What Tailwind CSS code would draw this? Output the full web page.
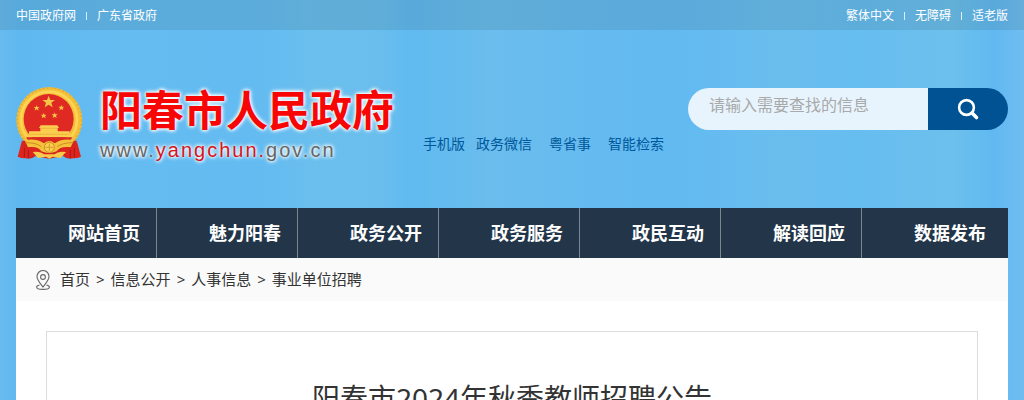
<!DOCTYPE html>
<html lang="zh-CN">
<head>
	<meta charset="UTF-8">
	<meta name="viewport" content="width=device-width, initial-scale=1.0">
	<title>阳春市2024年秋季教师招聘公告</title>
	<script src="https://cdn.jsdelivr.net/npm/@tailwindcss/browser@4"></script>
</head>
<body class="min-h-screen overflow-x-hidden bg-[#65bbf0] bg-[linear-gradient(90deg,#68bbef_0%,#5fb8f0_2%,#64bcf1_12%,#63bbf1_25%,#6abfed_31%,#69beed_37%,#60baf0_40%,#6abded_48%,#66bbef_56%,#62baf1_66%,#6abeee_76%,#66bdf0_84%,#6cc0ec_93%,#60b9f1_97%,#70bdf0_100%)] font-['Noto_Sans','Noto_Sans_CJK_SC',sans-serif] text-[#333]">
	<!-- Top bar -->
	<div class="flex h-[30px] items-center justify-between bg-[#3c6e87]/20 px-4 pt-px text-xs text-white">
		<div class="flex items-center gap-2.5">
			<a href="#">中国政府网</a>
			<span class="h-2 w-px bg-white/80"></span>
			<a href="#">广东省政府</a>
		</div>
		<div class="flex items-center gap-2.5">
			<a href="#">繁体中文</a>
			<span class="h-2 w-px bg-white/80"></span>
			<a href="#">无障碍</a>
			<span class="h-2 w-px bg-white/80"></span>
			<a href="#">适老版</a>
		</div>
	</div>

	<!-- Header -->
	<header class="flex h-[178px] items-start px-4">
		<a href="#" class="flex shrink-0 items-start gap-4 pt-14">
			<svg class="h-[74px] w-[67px]" viewBox="6 6 201 222" aria-hidden="true">
				<circle cx="106" cy="108" r="99" fill="#f4c03a"/>
				<circle cx="106" cy="108" r="96" fill="none" stroke="#d99a28" stroke-width="3" stroke-dasharray="5 7"/>
				<circle cx="105" cy="107" r="84" fill="none" stroke="#fbd553" stroke-width="8"/>
				<circle cx="104" cy="105" r="75" fill="#df2a24"/>
				<g fill="#f6c544">
					<path d="M104 35l5 13h14l-11 8 4 14-12-8-12 8 4-14-11-8h14z"/>
					<path d="M68 63l2 6 7 0-5 4 2 7-6-4-6 4 2-7-5-4 7 0z"/>
					<path d="M142 62l2 6 7 0-5 4 2 7-6-4-6 4 2-7-5-4 7 0z"/>
					<path d="M89 86l2 6 7 0-5 4 2 7-6-4-6 4 2-7-5-4 7 0z"/>
					<path d="M122 85l2 6 7 0-5 4 2 7-6-4-6 4 2-7-5-4 7 0z"/>
				</g>
				<path d="M80 124h50l5 8h-4v10h36v6l7 12H38l7-12v-6h34v-10h-4z" fill="#fbcd4f"/>
				<path d="M80 133h50M46 151h118" stroke="#e9a93a" stroke-width="2"/>
				<path d="M36 160h139l-8 13H45z" fill="#d92a20"/>
				<path d="M25 170q-5 28 4 30l-4 20q24 10 40-4l40 8 42-8q16 14 40 4l-3-20q8-6 3-30z" fill="#d5241e"/>
				<path d="M32 168q38-6 58 10 16-14 32 0 20-16 58-10l-10 22q-32-4-42 12-24 10-46 0-10-16-40-12z" fill="#f5c03a"/>
				<path d="M34 176q34 0 48 12M178 176q-34 0-48 12" fill="none" stroke="#cf8c22" stroke-width="3"/>
				<circle cx="106" cy="190" r="15" fill="#f9cf52" stroke="#d28d24" stroke-width="3"/>
				<path d="M94 190h24M106 179v22" stroke="#d99a28" stroke-width="3"/>
				<path d="M25 166q-3 16 8 24 26-2 38 8 14 16 35 10 21 6 35-10 12-10 38-8 11-8 8-24l14 52q-24 10-40-2l-22-12-33 9-33-9-22 12q-16 12-40 2z" fill="#dd251e"/>
				<path d="M31 192v28M43 197v24M169 197v24M181 192v28" stroke="#a51916" stroke-width="3"/>
				<path d="M56 204q24-3 34 7h32q10-10 34-7l-16 18-24-4-10 6-10-6-24 4z" fill="#f8c94a"/>
			</svg>
			<div class="pl-px text-shadow-[0_0_3px_white,0_0_4px_white,0_0_5px_white]">
				<h1 class="text-[42px] leading-[48px] font-bold text-[#f80505]">阳春市人民政府</h1>
				<p class="font-['Liberation_Sans',sans-serif] text-xl leading-8 tracking-widest text-[#666]">www.<span class="text-[#d8141c]">yangchun.</span>gov.cn</p>
			</div>
		</a>

		<nav class="ml-[29px] flex shrink-0 gap-[17px] pt-[104px] text-sm leading-5 text-[#00589c]">
			<div class="flex gap-[11px]">
				<a href="#">手机版</a>
				<a href="#">政务微信</a>
			</div>
			<a href="#">粤省事</a>
			<a href="#">智能检索</a>
		</nav>

		<form class="mt-[58px] ml-auto flex h-[42px] w-80 overflow-hidden rounded-full">
			<input type="text" aria-label="搜索" placeholder="请输入需要查找的信息" class="min-w-0 flex-1 bg-[#e8f4fd] pr-2 pb-2 pl-[21px] text-base text-[#333] outline-none placeholder:text-[#a9a9a9]">
			<button type="button" aria-label="搜索" class="flex w-20 items-center justify-center bg-[#005293]">
				<svg class="size-6" viewBox="0 0 24 24" fill="none" stroke="white" aria-hidden="true">
					<circle cx="10.5" cy="10.5" r="7.4" stroke-width="2.600"/>
					<path d="M16 16l4.500 4.500" stroke-width="3.600" stroke-linecap="round"/>
				</svg>
			</button>
		</form>
	</header>

	<main class="mx-4 bg-white">
		<!-- Main menu -->
		<nav class="grid h-[50px] grid-cols-[repeat(6,141fr)_146fr] bg-[#223549] text-lg leading-[50px] font-bold text-white">
			<a href="#" class="border-r border-[#7a8692] pl-[52px]">网站首页</a>
			<a href="#" class="border-r border-[#7a8692] pl-[52px]">魅力阳春</a>
			<a href="#" class="border-r border-[#7a8692] pl-[52px]">政务公开</a>
			<a href="#" class="border-r border-[#7a8692] pl-[52px]">政务服务</a>
			<a href="#" class="border-r border-[#7a8692] pl-[52px]">政民互动</a>
			<a href="#" class="border-r border-[#7a8692] pl-[52px]">解读回应</a>
			<a href="#" class="pl-[52px]">数据发布</a>
		</nav>

		<!-- Breadcrumb -->
		<div class="flex h-[43px] items-center bg-[#fafafa] pl-5 text-[15px]">
			<svg class="mr-2.5 h-5 w-3.5" viewBox="0 0 14 20" fill="none" stroke="#666" aria-hidden="true">
				<path d="M7 17C4 13 1 10 1 6.500a6 6 0 0 1 12 0C13 10 10 13 7 17z" stroke-width="1.100"/>
				<circle cx="7" cy="7" r="2.400" stroke-width="1.100"/>
				<path d="M3.500 15C1.500 15.500.6 16.200.6 17c0 1.500 3 2.400 6.400 2.400s6.400-.9 6.400-2.400c0-.8-.9-1.500-2.900-2" stroke-width="1.100"/>
			</svg>
			<div class="flex gap-1.5">
				<a href="#">首页</a>
				<span>&gt;</span>
				<a href="#">信息公开</a>
				<span>&gt;</span>
				<a href="#">人事信息</a>
				<span>&gt;</span>
				<a href="#">事业单位招聘</a>
			</div>
		</div>

		<!-- Article -->
		<div class="px-[30px] pt-[30px]">
			<article class="border border-[#ddd] px-8 pt-[46px]">
				<h2 class="text-center text-[28px] leading-10">阳春市2024年秋季教师招聘公告</h2>
			</article>
		</div>
	</main>
</body>
</html>
